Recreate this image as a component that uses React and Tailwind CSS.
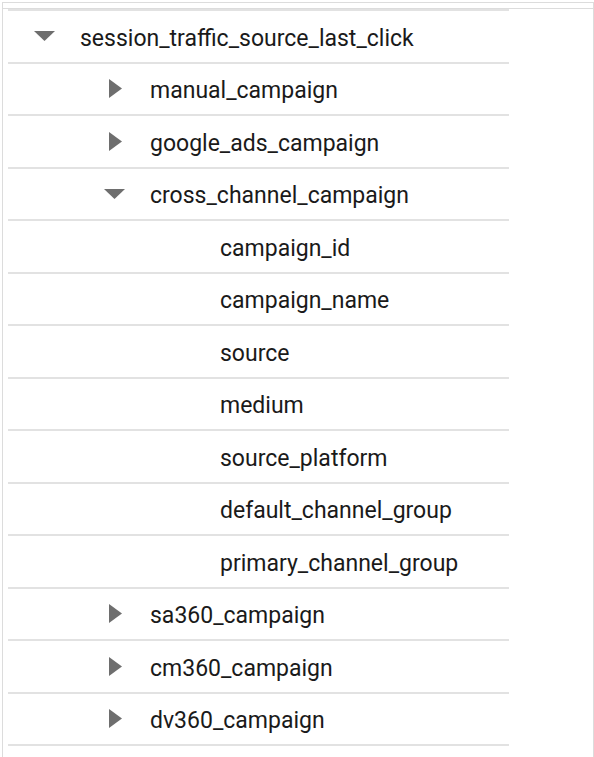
const rows = [
  { label: 'session_traffic_source_last_click', level: 0, icon: 'down' },
  { label: 'manual_campaign', level: 1, icon: 'right' },
  { label: 'google_ads_campaign', level: 1, icon: 'right' },
  { label: 'cross_channel_campaign', level: 1, icon: 'down' },
  { label: 'campaign_id', level: 2 },
  { label: 'campaign_name', level: 2 },
  { label: 'source', level: 2 },
  { label: 'medium', level: 2 },
  { label: 'source_platform', level: 2 },
  { label: 'default_channel_group', level: 2 },
  { label: 'primary_channel_group', level: 2 },
  { label: 'sa360_campaign', level: 1, icon: 'right' },
  { label: 'cm360_campaign', level: 1, icon: 'right' },
  { label: 'dv360_campaign', level: 1, icon: 'right' },
];

const indent = ['pl-[24px]', 'pl-[94px]', 'pl-[164px]'];

const Caret = ({ dir }) => {
  if (dir === 'down') {
    return (
      <svg width="21" height="10" viewBox="0 0 21 10">
        <path d="M0 0 L21 0 L10.5 10 Z" fill="#6e6e6e" />
      </svg>
    );
  }
  if (dir === 'right') {
    return (
      <svg width="13" height="19" viewBox="0 0 13 19" className="ml-[3px]">
        <path d="M0 0 L13 9.5 L0 19 Z" fill="#6e6e6e" />
      </svg>
    );
  }
  return null;
};

export default function App() {
  return (
    <div className="w-[594px] h-[757px] bg-white pt-[2px] pl-[2px] overflow-hidden font-['Roboto',sans-serif]">
      <div className="h-[760px] w-[592px] border-l border-t border-r border-[#dcdcdc]">
        <div className="h-[6px] border-b border-[#dcdcdc]" />
        <div className="ml-[5px] w-[501px] border-t-2 border-[#e2e2e2]">
          {rows.map((row) => (
            <div
              key={row.label}
              className={`h-[52.5px] border-b-2 border-[#e2e2e2] flex items-center ${indent[row.level]}`}
            >
              <div className="w-[24px] flex items-center justify-center shrink-0">
                <Caret dir={row.icon} />
              </div>
              <span className="ml-[24px] pt-[4px] text-[23px] leading-none text-[#1a1a1a] whitespace-nowrap">{row.label}</span>
            </div>
          ))}
        </div>
      </div>
    </div>
  );
}
